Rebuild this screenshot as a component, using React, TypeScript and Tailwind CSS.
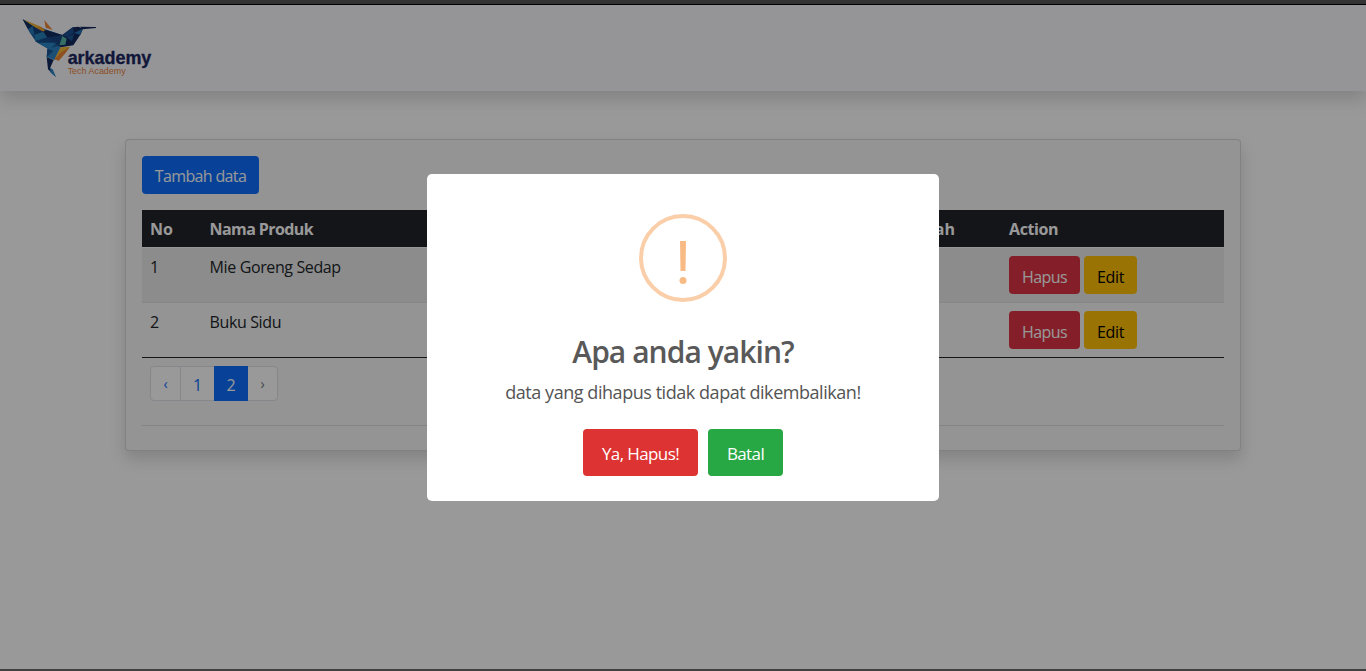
const products = [
  { no: 1, name: "Mie Goreng Sedap" },
  { no: 2, name: "Buku Sidu" },
];

function Logo() {
  return (
    <svg width="140" height="66" viewBox="54 42 420 198" aria-label="arkademy">
      <polygon points="68,58 136,88 187,105 176,152 150,150 108,125 90,98" fill="#1c5fa0" />
      <polygon points="68,58 118,78 136,92 122,94 98,77" fill="#f2b936" />
      <polygon points="108,80 122,80 140,93 126,95" fill="#f09a2c" />
      <polygon points="68,58 98,78 84,88" fill="#14305f" />
      <polygon points="84,88 98,78 104,104 92,101" fill="#2478b4" />
      <polygon points="98,78 130,95 104,104" fill="#16407d" />
      <polygon points="104,104 130,95 142,112 106,124" fill="#2780b8" />
      <polygon points="136,90 187,105 160,114 142,112 130,95" fill="#122a5e" />
      <polygon points="106,124 142,112 168,128 118,130" fill="#174c8b" />
      <polygon points="142,112 187,106 176,138" fill="#1a4380" />
      <polygon points="112,128 168,128 150,148" fill="#2c85c4" />
      <polygon points="133,60 158,90 137,83" fill="#ee8434" />
      <polygon points="187,105 218,82 236,80 249,86 242,103 220,136 182,142 176,138" fill="#14295c" />
      <polygon points="187,105 218,82 222,99 200,112" fill="#1c4d90" />
      <polygon points="222,99 249,86 240,104" fill="#2473b4" />
      <polygon points="187,108 200,116 196,134 178,136" fill="#59b8a8" />
      <polygon points="200,112 222,102 216,124" fill="#1d5596" />
      <polygon points="240,80 288,81 288,84 248,88" fill="#14295c" />
      <polygon points="142,146 176,138 182,142 164,180 140,172" fill="#2d83c3" />
      <polygon points="142,146 160,152 140,172" fill="#195494" />
      <polygon points="182,142 210,140 176,182 164,176" fill="#f2b936" />
      <polygon points="180,160 210,140 196,160 176,182 164,178" fill="#ee8434" />
      <polygon points="140,172 161,180 150,205 168,231 144,208" fill="#14295c" />
      <polygon points="150,203 158,208 168,231 152,218" fill="#2c85c4" />
      <text x="203" y="193" fontFamily="Liberation Sans, sans-serif" fontWeight="700" fontSize="55" textLength="251" lengthAdjust="spacingAndGlyphs" fill="#1b2760" stroke="#1b2760" strokeWidth="1">arkademy</text>
      <text x="203" y="223" fontFamily="Liberation Sans, sans-serif" fontSize="27" textLength="174" lengthAdjust="spacingAndGlyphs" fill="#e8833a">Tech Academy</text>
    </svg>
  );
}

export default function App() {
  return (
    <div className="flex h-[671px] w-[1366px] flex-col overflow-hidden bg-white font-['Open_Sans','Noto_Sans',sans-serif] text-base text-[#212529]">
      <div className="h-[5px] shrink-0 border-b border-black bg-[#353536]" />
      <header className="flex h-[86px] shrink-0 items-start bg-[#f8f9fd] pt-[9px] pl-[18px] shadow-[0_8px_16px_rgba(0,0,0,0.15)]">
        <Logo />
      </header>

      <main className="flex-1 px-[125px] pt-12">
        <section className="h-[312px] rounded border border-black/[0.125] bg-[#f7f7f7] p-4 shadow-[0_8px_16px_rgba(0,0,0,0.15)]">
          <button className="block h-[38px] w-[117px] rounded bg-[#0d6efd] pt-px tracking-[-0.65px] text-white">
            Tambah data
          </button>
          <table className="mt-4 w-full table-fixed border-separate border-spacing-0 text-left">
            <colgroup>
              <col className="w-[59.6px]" />
              <col />
              <col className="w-[130px]" />
              <col className="w-[223px]" />
            </colgroup>
            <thead>
              <tr className="h-[38px] bg-[#22242a] text-white *:border-b *:border-[#fafafa]">
                <th className="px-2 pt-px">No</th>
                <th className="px-2 pt-px tracking-[-0.6px]">Nama Produk</th>
                <th className="pt-px pr-[46px] text-right">Jumlah</th>
                <th className="px-2 pt-px tracking-[-0.4px]">Action</th>
              </tr>
            </thead>
            <tbody>
              {products.map((p) => (
                <tr
                  key={p.no}
                  className="h-[55px] align-top *:border-b *:border-[#dee2e6] odd:bg-[#eaeaea] last:*:border-[#212529]"
                >
                  <td className="px-2 pt-[7px] leading-6">{p.no}</td>
                  <td className="px-2 pt-[7px] leading-6 tracking-[-0.38px]">{p.name}</td>
                  <td />
                  <td className="px-2 pt-2">
                    <div className="flex gap-1">
                      <button className="h-[38px] w-[71px] rounded bg-[#dc3545] pt-[3px] tracking-[-0.6px] text-white">Hapus</button>
                      <button className="h-[38px] w-[53px] rounded bg-[#ffc107] pt-[3px] tracking-[-0.3px] text-black">Edit</button>
                    </div>
                  </td>
                </tr>
              ))}
            </tbody>
          </table>
          <nav className="mt-2 ml-2 flex h-[35px] w-[128px] rounded border border-[#dee2e6] bg-white text-[#0d6efd]">
            <span className="flex w-[30px] items-center justify-center border-r border-[#dee2e6] text-sm">‹</span>
            <span className="flex w-[33px] items-center justify-center pt-0.5">1</span>
            <span className="-my-px flex w-[34px] items-center justify-center bg-[#0d6efd] pt-0.5 text-white">2</span>
            <span className="flex flex-1 items-center justify-center text-sm text-[#6c757d]">›</span>
          </nav>
          <hr className="mt-6 border-[#dcdcdc]" />
        </section>
      </main>
      <div className="h-[2px] shrink-0 bg-[#414141]" />

      <div className="fixed top-[5px] bottom-[2px] left-0 flex w-[1366px] items-start justify-center bg-black/40 pt-[169px]">
        <div role="dialog" className="flex h-[327px] w-[512px] flex-col items-center rounded-[5px] bg-white pt-10">
          <svg width="88" height="88" viewBox="0 0 88 88">
            <circle cx="44" cy="44" r="42" fill="none" stroke="#facea8" strokeWidth="4" />
            <path d="M41 27h6l-.5 30h-5z" fill="#f8bb86" />
            <circle cx="44" cy="66.5" r="3.5" fill="#f8bb86" />
          </svg>
          <h2 className="mt-[30px] text-[30px] leading-10 font-semibold tracking-[-0.95px] text-[#595959]">Apa anda yakin?</h2>
          <p className="mt-[7px] text-lg leading-[27px] tracking-[-0.45px] whitespace-nowrap text-[#545454]">
            data yang dihapus tidak dapat dikembalikan!
          </p>
          <div className="mt-[23px] flex gap-2.5 text-[17px] text-white">
            <button className="h-[47px] w-[115px] rounded bg-[#dd3333] pt-[3px] tracking-[-0.6px]">Ya, Hapus!</button>
            <button className="h-[47px] w-[75px] rounded bg-[#28a745] pt-[3px] tracking-[-0.6px]">Batal</button>
          </div>
        </div>
      </div>
    </div>
  );
}
